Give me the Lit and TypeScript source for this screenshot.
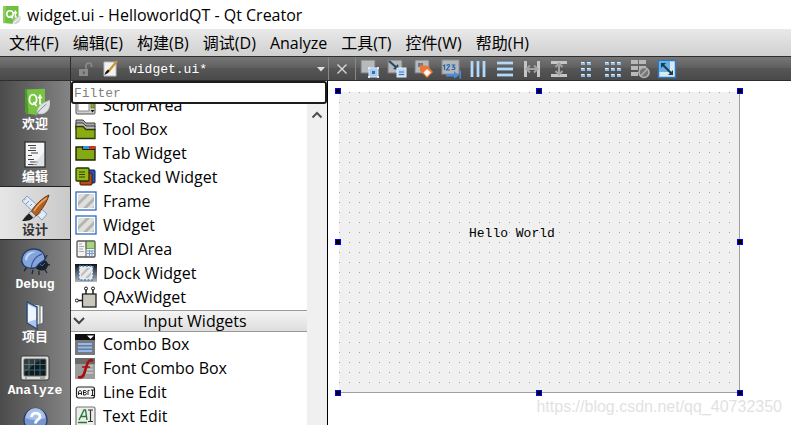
import { LitElement, html, svg, css, nothing, type TemplateResult, type SVGTemplateResult } from "lit";
import { customElement, property } from "lit/decorators.js";
import { classMap } from "lit/directives/class-map.js";

type Art = SVGTemplateResult;

const icon = (art: Art, size: number, cls = ""): TemplateResult => html`
  <svg class=${cls} width=${size} height=${size} viewBox="0 0 ${size} ${size}" aria-hidden="true">${art}</svg>
`;

/* ---------- title bar ---------- */

const qtMark = svg`
  <path d="M0 1h15.500v12L11 19l-11-1z" fill="#6fc03e"/>
  <path d="M0 1h3l-1 17.200L0 18z" fill="#8bd05c"/>
  <circle cx="7" cy="9" r="3.200" fill="none" stroke="#fff" stroke-width="1.600"/>
  <path d="M7.500 10.500l2.500 3M12.400 5.500v6.500h1.400M10.800 7.800h3.200" fill="none" stroke="#fff" stroke-width="1.500"/>
  <path d="M9.500 19c0-4 3-6.500 8-8 .8 5-2 9-8 8z" fill="#d3d6d6"/>
  <path d="M9 20l7-7" stroke="#fff" stroke-width=".8"/>
`;

/* ---------- mode bar, 30 x 30 ---------- */

const modeArt: Record<string, Art> = {
  welcome: svg`
    <path d="M5 2.500l20-.8v18L17 28 6.500 26.500 5 24z" fill="#76c442"/>
    <path d="M5 2.500l2-.5 1.500 24.500-2-.2L5 24z" fill="#4f9b2a"/>
    <ellipse cx="13" cy="12.500" rx="3.600" ry="4.800" fill="none" stroke="#fff" stroke-width="1.800"/>
    <path d="M13.500 15l3 4M20 7.500v9q0 1.200 2 .8M17.800 10.500h4.400" fill="none" stroke="#fff" stroke-width="1.700"/>
    <path d="M17 26c-.5-6 4-9.500 13-13 1 8-3 15-11 14z" fill="#dfe2e2" stroke="#a4a8a8" stroke-width=".6"/>
    <path d="M15.500 29c2-4 6-8 11-12" fill="none" stroke="#8b9090"/>`,
  edit: svg`
    <rect x="5" y="2" width="20" height="25" fill="#f4f5f6" stroke="#2e2e2e" stroke-width="1.300"/>
    <path d="M8 5.500h8M10 8h6M8 10.500h8M11 13h7M8 15.500h4M8 19.500h6M10 22h8M8 24.500h9" stroke="#444" stroke-width="1.200"/>
    <path d="M24 12v14H12z" fill="#d3d6da" opacity=".6"/>`,
  design: svg`
    <path d="M2 8l5-5 20 18-5 6z" fill="#e3ebf7" stroke="#8b9dbd"/>
    <path d="M6 5.500l-2 2M9 8l-3 3M12 11l-2 2M15 13.500l-3 3M18 16l-2 2M21 19l-3 3" stroke="#7488ad" stroke-width=".9"/>
    <path d="M29 2C22 5 15 12 11 19l5 4C22 17 27 9 29 2z" fill="#b4611f" stroke="#5e2c0b" stroke-width=".9"/>
    <path d="M27 5c-5 3-10 8-13 13" stroke="#eba665" stroke-width="1.500" fill="none"/>
    <path d="M11 18l5 5-2.500 2-5-4.500z" fill="#cfd2d6" stroke="#555" stroke-width=".6"/>
    <path d="M9 20.500l4 4C11 28 6 28 2 28c2-2 3.500-5.500 7-7.500z" fill="#25201e"/>`,
  debug: svg`
    <path d="M7 20l-3 4M13 23l-1 4M24 21l3 5M26 17l4 1M19 24l0 4M25 12l2-4M4 14l-3 1" stroke="#1d2733" stroke-width="1.300"/>
    <ellipse cx="21.500" cy="18" rx="6.500" ry="5.500" fill="#17202c"/>
    <path d="M2 15C1 7 7 2 14 2c7 0 11 5 11 10-1 2-4 3-6 5-2 2-3 4-5 4-5 1-11-1-12-6z" fill="#83a5dc" stroke="#243c6d" stroke-width="1.300"/>
    <path d="M5 12C6 6 11 4 16 5c-5 1-9 4-9 9z" fill="#c7d9f7"/>
    <path d="M22 7C16 9 12 14 11 21" fill="none" stroke="#35548d" stroke-width="1.100"/>
    <path d="M20 17l2 2 3-3" stroke="#56677f" fill="none"/>`,
  projects: svg`
    <path d="M15 5l8 1v17l-8 4z" fill="#fff" stroke="#57636f"/>
    <path d="M13 4l7 1v19l-7 3z" fill="#e8e2cf" stroke="#57636f"/>
    <path d="M7 2l10 5v22L7 23z" fill="#a9c6ee" stroke="#2c466f" stroke-width="1.300"/>
    <path d="M8 4.500l8 4v11L8 22z" fill="#eef5ff"/>`,
  analyze: svg`
    <rect x="1" y="3" width="28" height="24" rx="2" fill="#dcdcd8" stroke="#3b3b3b"/>
    <rect x="4" y="6" width="22" height="17" rx="1" fill="#101a1f" stroke="#666"/>
    <path d="M9 6v17M14.500 6v17M20 6v17M4 11.500h22M4 17h22" stroke="#3c7178" stroke-width=".9"/>
    <path d="M5 7h15L5 19z" fill="#fff" opacity=".15"/>
    <path d="M20 25h5M5 25h2" stroke="#777"/>`,
  help: svg`
    <circle cx="15.500" cy="14" r="11.500" fill="#7896cb" stroke="#263c67" stroke-width="1.300"/>
    <path d="M5.500 12a10 10 0 0 1 20 0q-10 4-20 0z" fill="#a9c1ea"/>
    <path d="M11.500 11c0-5 8.500-5 8.500-.5 0 3.500-4.500 3-4.500 7M15.500 20v2.500" fill="none" stroke="#fff" stroke-width="2.800"/>`,
};

/* ---------- widget box, 22 x 22 ---------- */

const stripes = svg`
  <rect x="3" y="4" width="16" height="14" fill="#dfdfdc"/>
  <path d="M3 12l8-8h4L3 16zM8 18L19 7v4l-7 7zM17 18l2-2v2z" fill="#b3b3af"/>`;

const widgetArt: Record<string, Art> = {
  scroll: svg`
    <rect x="1" y="2" width="19" height="18" rx="1" fill="#d0d0cd" stroke="#555"/>
    <rect x="3" y="3" width="11" height="14" fill="#fff" stroke="#888"/>
    <rect x="16" y="3" width="3" height="11" fill="#86b51b" stroke="#445c10" stroke-width=".6"/>
    <path d="M15.500 16h4l-2 2.500z" fill="#111"/>`,
  toolbox: svg`
    <path d="M1 2h7l3 3h9v4H1z" fill="#a8a8a8" stroke="#3f3f3f"/>
    <path d="M1 5h7l3 3h9v4H1z" fill="#bcbcbc" stroke="#3f3f3f"/>
    <path d="M1 8.500h7l3 3h9v9H1z" fill="#8aab14" stroke="#2c3a04" stroke-width="1.300"/>`,
  tab: svg`
    <path d="M1 5h19v13H1z" fill="#86a812" stroke="#1d2603" stroke-width="1.400"/>
    <path d="M8 4h6v3H8z" fill="#2d95df"/><path d="M14.500 4H20v3h-5.500z" fill="#e52a22"/>
    <path d="M7.500 4v3.500H20" fill="none" stroke="#1d2603"/>`,
  stacked: svg`
    <rect x="9" y="4" width="11" height="13" rx="1" fill="#2455c4" stroke="#0e1e4b"/>
    <rect x="5" y="7" width="12" height="12" rx="1" fill="#bb4a16" stroke="#43190a"/>
    <rect x="1" y="2" width="13" height="13" rx="1" fill="#93b81b" stroke="#263300" stroke-width="1.300"/>
    <path d="M4 6h6M4 8.500h6M4 11h6" stroke="#2f3e05"/>`,
  frame: svg`
    <rect x="1" y="2" width="20" height="18" fill="#fff" stroke="#2e6cc0" stroke-width="1.300"/>${stripes}`,
  mdi: svg`
    <rect x="2" y="3" width="18" height="16" rx="1" fill="#f3f3f1" stroke="#555" stroke-width="1.300"/>
    <rect x="11" y="3.500" width="8.500" height="7" fill="#a6d37c" stroke="#4f6e3a" stroke-width=".6"/>
    <path d="M11 3v16" stroke="#555"/><path d="M4 6h3M4 8.500h5M4 11h4M4 13.500h5" stroke="#aaa"/>
    <path d="M12 13h7M12 15.500h7M14.500 12v6M17 12v6" stroke="#6f9bd0"/>`,
  dock: svg`
    <defs><linearGradient id="dockShade" x1="0" y1="0" x2="0" y2="1">
      <stop offset="0" stop-color="#111"/><stop offset="1" stop-color="#b4b6b8"/></linearGradient></defs>
    <rect x="0" y="2" width="22" height="18" fill="url(#dockShade)"/>
    <rect x="4" y="4" width="14" height="14" fill="#e9e9e7" stroke="#3b7bd0" stroke-width="1.300" stroke-dasharray="2 1.500"/>
    <path d="M6 12l6-6h3l-9 9zM10 16l6-6v3l-3 3z" fill="#bdbdb9"/>`,
  qax: svg`
    <path d="M11 4v5M18 4v5M3 14.500h5" stroke="#111" stroke-width="1.400"/>
    <circle cx="11" cy="2.500" r="1.500" fill="#fff" stroke="#111"/><circle cx="18" cy="2.500" r="1.500" fill="#fff" stroke="#111"/>
    <circle cx="1.800" cy="14.500" r="1.500" fill="#fff" stroke="#111"/>
    <rect x="7.500" y="8" width="13.500" height="13" fill="#c9c6be" stroke="#222" stroke-width="1.300"/>`,
  combo: svg`
    <rect x="0" y="1" width="20" height="21" fill="#757a80"/><rect x="0" y="1" width="20" height="6" fill="#0e0e0f"/>
    <path d="M12 2.500h7l-3.500 3.500z" fill="#fff"/>
    <path d="M3 11h14M3 14.500h14M3 18h14" stroke="#8fb9ef" stroke-width="2"/>`,
  font: svg`
    <rect x="0" y="1" width="20" height="21" fill="#9c9c9b"/><rect x="0" y="1" width="20" height="6" fill="#6a6a6a"/>
    <path d="M12 9h6M11 12.500h7M11 16h7" stroke="#c5c5c3" stroke-width="1.600"/>
    <path d="M18 4c-3-2-5 0-6 4l-3 9c-1 3-3 4-6 3" fill="none" stroke="#a80d0f" stroke-width="2.600"/>
    <path d="M7 10h8" stroke="#a80d0f" stroke-width="1.500"/>`,
  line: svg`
    <rect x="1.500" y="6" width="18" height="11" rx="2" fill="#f5f5f4" stroke="#222" stroke-width="1.200"/>
    <path d="M3.500 14v-3l1-1.500h1l1 1.500v3M3.500 12.500h3M8.500 14V9.500h2l.8 1-.8 1h-2M10.500 11.500l.8 1-.8 1.500h-2M13 9.500v4.500M13 9.500h1.500M16 9h3M16 14.500h3M17.500 9v5.500" fill="none" stroke="#111" stroke-width=".9"/>`,
  text: svg`
    <rect x="1" y="2" width="19" height="19" rx="1.500" fill="#eceeec" stroke="#777" stroke-width="1.200"/>
    <path d="M4 15l5-10h1.500l1.500 10M6 11.500h5M3 17.500h9" fill="none" stroke="#257a33" stroke-width="1.400"/>
    <path d="M13 5h5M13 16.500h5M15.500 5v11.500" stroke="#333" stroke-width="1.200"/>`,
};

/* ---------- form tool bar, 20 x 20 ---------- */

const page = svg`<rect x="1" y="1" width="14" height="13" fill="#b7babd" stroke="#777a7d"/>`;
const cells = (xs: number[]): Art => svg`${xs.map(
  (x) => svg`<path d="M${x} 3h4v3h-4zM${x} 9h4v3h-4zM${x} 15h4v3h-4z" fill="#8fbde4"/><path d="M${x} 3.500h3M${x} 9.500h3M${x} 15.500h3" stroke="#e2f1ff"/>`,
)}`;

const tools: { name: string; art: Art }[] = [
  { name: "Edit Widgets", art: svg`${page}
    <rect x="9" y="9" width="9" height="9" fill="#a9cbef" stroke="#dcecff"/>
    <path d="M8 8h2v2H8zM17 8h2v2h-2zM8 17h2v2H8zM17 17h2v2h-2z" fill="#dcecff"/><path d="M12 12h3v3h-3z" fill="#3570b5"/>` },
  { name: "Edit Signals/Slots", art: svg`${page}
    <path d="M2 2l8 7" stroke="#24445f" stroke-width="2"/><path d="M12 11l-6-1 5-5z" fill="#24445f"/>
    <rect x="10" y="9" width="9" height="9" fill="#bcd8f5" stroke="#e4f1ff"/><path d="M12 13h5M12 15.500h5" stroke="#3c74b7"/>` },
  { name: "Edit Buddies", art: svg`${page}
    <path d="M4 4h5v4H4z" fill="#777"/><path d="M6 6l8 1 5 6-6 6-7-7z" fill="#e8763a"/><path d="M13 10l4 3.500-4 4-3.500-4z" fill="#fff4ea"/>` },
  { name: "Edit Tab Order", art: svg`
    <rect x="1" y="1" width="17" height="14" fill="#b5b8bb" stroke="#8b8e91"/>
    <path d="M2 7l1.500-1v5M5.500 6.500q3-2 3 .5l-3 4H9M10.500 6h3l-1.500 2q3 0 1.500 2.500h-3" fill="none" stroke="#2863b0" stroke-width="1.200"/>
    <path d="M5 15h8v-3l5 4.500-5 3v-2H5zM18.500 11.500h1.500v8h-1.500z" fill="#4b8ddb"/>` },
  { name: "Lay Out Horizontally", art: svg`<path d="M4 2v16M10 2v16M16 2v16" stroke="#90bfe7" stroke-width="3"/><path d="M4 2v16M10 2v16M16 2v16" stroke="#e0f0ff"/>` },
  { name: "Lay Out Vertically", art: svg`<path d="M2 4h16M2 10h16M2 16h16" stroke="#90bfe7" stroke-width="3"/><path d="M2 4h16M2 10h16M2 16h16" stroke="#e0f0ff"/>` },
  { name: "Lay Out Horizontally in Splitter", art: svg`<path d="M3.500 2v16M16.500 2v16" stroke="#c5c5c5" stroke-width="3"/><path d="M4 10h12M8 6.500L4.500 10 8 13.500M12 6.500l3.500 3.500-3.500 3.500" fill="none" stroke="#a2a2a2" stroke-width="2"/>` },
  { name: "Lay Out Vertically in Splitter", art: svg`<path d="M2 3.500h16M2 16.500h16" stroke="#c5c5c5" stroke-width="3"/><path d="M10 4v12M6.500 8L10 4.500 13.500 8M6.500 12l3.500 3.500 3.500-3.500" fill="none" stroke="#a2a2a2" stroke-width="2"/>` },
  { name: "Lay Out in a Form Layout", art: cells([5, 11]) },
  { name: "Lay Out in a Grid", art: cells([2, 8, 14]) },
  { name: "Break Layout", art: svg`
    <path d="M1 1h7v4H1zM9 1h7v4H9zM1 7h7v4H1zM9 7h7v4H9zM1 13h7v4H1z" fill="#b9b9b9"/>
    <circle cx="14" cy="13.500" r="5" fill="#777" stroke="#b2b2b2" stroke-width="1.600"/><path d="M10.500 17l7-7" stroke="#b2b2b2" stroke-width="1.500"/>` },
  { name: "Adjust Size", art: svg`
    <rect x="1.500" y="1.500" width="17" height="17" fill="#d9e9ef" stroke="#2e79bd" stroke-width="1.500"/><path d="M2 2h11v11H2z" fill="#69afe2"/>
    <path d="M5 5l10 10" stroke="#163d52" stroke-width="2"/><path d="M4 4h5L4 9zM16 16h-5l5-5z" fill="#163d52"/>` },
];

const menus = ["文件(F)", "编辑(E)", "构建(B)", "调试(D)", "Analyze", "工具(T)", "控件(W)", "帮助(H)"];

const modes: { id: string; label?: string }[] = [
  { id: "welcome", label: "欢迎" },
  { id: "edit", label: "编辑" },
  { id: "design", label: "设计" },
  { id: "debug", label: "Debug" },
  { id: "projects", label: "项目" },
  { id: "analyze", label: "Analyze" },
  { id: "help" },
];

const containers = [
  { art: "scroll", label: "Scroll Area" },
  { art: "toolbox", label: "Tool Box" },
  { art: "tab", label: "Tab Widget" },
  { art: "stacked", label: "Stacked Widget" },
  { art: "frame", label: "Frame" },
  { art: "frame", label: "Widget" },
  { art: "mdi", label: "MDI Area" },
  { art: "dock", label: "Dock Widget" },
  { art: "qax", label: "QAxWidget" },
];

const inputs = [
  { art: "combo", label: "Combo Box" },
  { art: "font", label: "Font Combo Box" },
  { art: "line", label: "Line Edit" },
  { art: "text", label: "Text Edit" },
];

const reset = css`
  * { box-sizing: border-box; }
  button, select, input {
    margin: 0; padding: 0; border: 0; border-radius: 0; background: none;
    color: inherit; font: inherit; appearance: none;
  }
  svg { display: block; flex: none; }
`;

@customElement("mode-bar")
export class ModeBar extends LitElement {
  @property() current = "design";

  static styles = [reset, css`
    :host {
      display: flex; flex-direction: column; overflow: hidden;
      background: linear-gradient(to right, #4b4b4b, #848484);
      border-right: 1px solid #2c2c2c;
    }
    .mode {
      flex: none; height: 53px; padding-top: 6px;
      display: flex; flex-direction: column; align-items: center;
      color: #fff; font: bold 13px/16px "Liberation Mono", "Noto Sans CJK SC", monospace;
      border-top: 1px solid transparent;
    }
    .mode:first-child { height: 52px; padding-top: 5px; }
    .on {
      height: 54px; color: #333;
      background: linear-gradient(to right, #e6e6e6, #c9c9c9);
      border-top-color: #222; border-bottom: 1px solid #222;
    }
  `];

  render() {
    return html`${modes.map((m) => html`
      <button class=${classMap({ mode: true, on: m.id === this.current })} aria-label=${m.label ?? m.id}
        @click=${() => (this.current = m.id)}>
        ${icon(modeArt[m.id], 30)}${m.label ? html`<span>${m.label}</span>` : nothing}
      </button>`)}`;
  }
}

@customElement("widget-box")
export class WidgetBox extends LitElement {
  static styles = [reset, css`
    :host {
      display: flex; flex-direction: column; overflow: hidden; background: #fff;
      border-right: 1px solid #000;
      font: 16px/24px "Open Sans", "Noto Sans", sans-serif; color: #000;
    }
    .filter {
      flex: none; height: 23px; padding: 2px 1px 0; background: #fff;
      border: 2px solid #1c1c1c; border-radius: 3px;
      font: 13px/17px "Liberation Mono", monospace;
    }
    .filter::placeholder { color: #808080; opacity: 1; }
    .scroller { flex: 1; min-height: 0; display: flex; }
    .list {
      flex: 1; min-width: 0; overflow: hidden;
      display: flex; flex-direction: column; justify-content: flex-start;
    }
    .items { margin: 0; padding: 0; list-style: none; }
    .containers { margin-top: -11px; }
    .item {
      width: 100%; height: 24px; padding: 0 4px; text-align: left;
      display: flex; align-items: center; gap: 6px;
    }
    .group {
      flex: none; height: 22px; margin-top: 1px; position: relative;
      display: flex; align-items: center; justify-content: center;
      background: linear-gradient(#f4f4f4, #dedede);
      border-top: 1px solid #999; border-bottom: 1px solid #999; padding-left: 12px;
    }
    .chevron { position: absolute; left: 0; }
    .track {
      flex: none; width: 20px; background: #f0f0f0;
      display: flex; flex-direction: column; align-items: center; padding-top: 3px;
    }
  `];

  private items(list: { art: string; label: string }[]) {
    return list.map((w) => html`
      <li><button class="item">${icon(widgetArt[w.art], 22)}<span>${w.label}</span></button></li>`);
  }

  render() {
    return html`
      <input class="filter" type="text" placeholder="Filter" aria-label="Filter">
      <div class="scroller">
        <div class="list">
          <ul class="items containers">${this.items(containers)}</ul>
          <button class="group">
            ${icon(svg`<path d="M3 5l5 5 5-5" fill="none" stroke="#444" stroke-width="2"/>`, 16, "chevron")}
            <span>Input Widgets</span>
          </button>
          <ul class="items">${this.items(inputs)}</ul>
        </div>
        <div class="track">
          ${icon(svg`<path d="M3.500 10.500L8 6l4.500 4.500" fill="none" stroke="#505050" stroke-width="2"/>`, 16)}
        </div>
      </div>`;
  }
}

@customElement("form-canvas")
export class FormCanvas extends LitElement {
  @property() text = "Hello World";

  static styles = [reset, css`
    :host { display: block; position: relative; overflow: hidden; background: #fff; padding: 7px; }
    .frame { position: relative; width: 408px; height: 308px; padding: 4px 3px 3px 4px; }
    .form {
      width: 401px; height: 301px; position: relative;
      border-right: 1px solid #a0a0a0; border-bottom: 1px solid #a0a0a0;
      background: #f0f0f0 conic-gradient(from 270deg at 1px 1px, #a0a0a0 90deg, transparent 0) 0 0 / 10px 10px;
    }
    .label {
      position: absolute; left: 130px; top: 131px;
      font: 13px/22px "Liberation Mono", monospace; color: #000;
    }
    .handle { position: absolute; width: 6px; height: 6px; background: #000; border: 1px solid #00f; }
    .left { left: 0; } .center { left: 201px; } .right { right: 0; }
    .top { top: 0; } .middle { top: 151px; } .bottom { bottom: 0; }
    .mark {
      position: absolute; right: 9px; bottom: 8px;
      font: 16px/20px "Liberation Sans", sans-serif; color: #e2e2e2;
    }
  `];

  render() {
    const spots = ["top left", "top center", "top right", "middle left", "middle right", "bottom left", "bottom center", "bottom right"];
    return html`
      <div class="frame">
        <div class="form"><span class="label">${this.text}</span></div>
        ${spots.map((s) => html`<i class="handle ${s}"></i>`)}
      </div>
      <span class="mark">https://blog.csdn.net/qq_40732350</span>`;
  }
}

@customElement("app-root")
export class AppRoot extends LitElement {
  static styles = [reset, css`
    :host {
      display: grid; height: 100vh; overflow: hidden;
      grid-template: 29px 27px 25px minmax(0, 1fr) / 71px 257px minmax(0, 1fr);
      font: 16px/20px "Open Sans", "Noto Sans", "Noto Sans CJK SC", sans-serif; color: #000;
    }
    .title { grid-column: 1 / -1; display: flex; align-items: center; gap: 4px; padding-left: 3px; background: #fff; }
    .menu {
      grid-column: 1 / -1; display: flex; align-items: center; padding-left: 2px;
      background: linear-gradient(#e9e9e9, #d0d0d0);
    }
    .menu button { padding: 0 7px; white-space: nowrap; }
    .bar {
      display: flex; align-items: center; min-width: 0; color: #fff;
      background: linear-gradient(#767676, #606060 45%, #565656 50%, #4a4a4a);
      border-top: 1px solid #2e2e2e; border-bottom: 1px solid #2e2e2e;
    }
    .corner { border-right: 1px solid #2c2c2c; }
    .file { padding-left: 6px; gap: 8px; position: relative; }
    .file select {
      flex: 1; align-self: stretch; padding: 2px 0 0 2px;
      font: 13px/21px "Liberation Mono", monospace; color: #fff;
    }
    .file option { color: #000; }
    .drop { position: absolute; right: 2px; pointer-events: none; }
    .close { width: 28px; height: 23px; display: grid; place-items: center; border-left: 1px solid #888; border-right: 1px solid #888; }
    .tool { width: 27px; height: 23px; flex: none; display: grid; place-items: center; }
  `];

  render() {
    return html`
      <header class="title">${icon(qtMark, 20)}<span>widget.ui - HelloworldQT - Qt Creator</span></header>
      <nav class="menu">${menus.map((m) => html`<button>${m}</button>`)}</nav>
      <div class="bar corner"></div>
      <div class="bar file">
        ${icon(svg`
          <path d="M2 8h9v7H2z" fill="#8a8a8a"/><path d="M9 8V5q0-3 3-3t2.500 4" fill="none" stroke="#8a8a8a" stroke-width="1.600"/>
          <path d="M6 10.500h1.500v2.500H6z" fill="#555"/>`, 16)}
        ${icon(svg`
          <path d="M3 2h12v14H3z" fill="#f2f2f0" stroke="#bbb"/>
          <path d="M16 1L7 12" stroke="#c9932f" stroke-width="2.200"/><path d="M8.500 10.500L7 13 3.500 15l1-3 2.500-2.500z" fill="#161616"/>`, 18)}
        <select aria-label="Open document"><option>widget.ui*</option></select>
        ${icon(svg`<path d="M1 3h8L5 7.500z" fill="#e0e0e0"/>`, 10, "drop")}
      </div>
      <div class="bar">
        <button class="close" aria-label="Close document">
          ${icon(svg`<path d="M1.500 1.500l9 9M10.500 1.500l-9 9" stroke="#d8d8d8" stroke-width="1.400"/>`, 12)}
        </button>
        ${tools.map((t) => html`<button class="tool" aria-label=${t.name}>${icon(t.art, 20)}</button>`)}
      </div>
      <mode-bar></mode-bar>
      <widget-box></widget-box>
      <form-canvas></form-canvas>`;
  }
}
